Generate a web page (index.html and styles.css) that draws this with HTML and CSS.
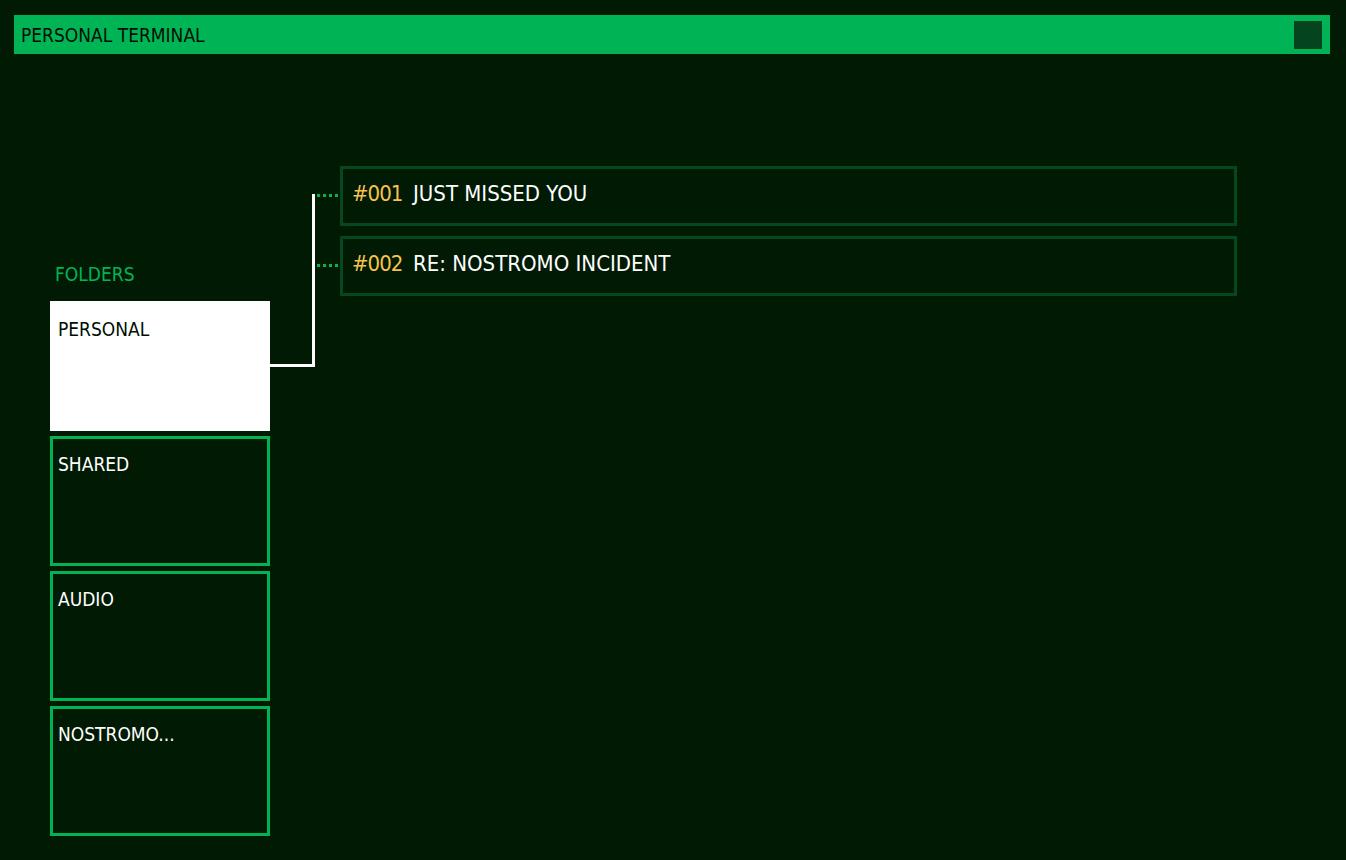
FILE: index.html
```html
<!DOCTYPE html>
<html>
<head>
<meta charset="utf-8">
<title>Personal Terminal</title>
<link rel="stylesheet" href="styles.css">
</head>
<body>
<header class="titlebar">
  <span class="title">PERSONAL TERMINAL</span>
  <span class="close-box"></span>
</header>
<main class="main">
  <section class="folders">
    <div class="folders-label">FOLDERS</div>
    <div class="folder folder-active">PERSONAL</div>
    <div class="folder">SHARED</div>
    <div class="folder">AUDIO</div>
    <div class="folder">NOSTROMO...</div>
  </section>
  <svg class="connector" width="70" height="202" viewBox="0 0 70 202">
    <rect x="42" y="28" width="3" height="173" fill="#ffffff"/>
    <rect x="0" y="198" width="45" height="3" fill="#ffffff"/>
    <g fill="#00b456">
      <rect x="47" y="28" width="3" height="3"/>
      <rect x="53" y="28" width="3" height="3"/>
      <rect x="59" y="28" width="3" height="3"/>
      <rect x="65" y="28" width="3" height="3"/>
      <rect x="47" y="98" width="3" height="3"/>
      <rect x="53" y="98" width="3" height="3"/>
      <rect x="59" y="98" width="3" height="3"/>
      <rect x="65" y="98" width="3" height="3"/>
    </g>
  </svg>
  <section class="messages">
    <div class="message"><span class="msg-num">#001</span><span class="msg-title">JUST MISSED YOU</span></div>
    <div class="message"><span class="msg-num">#002</span><span class="msg-title">RE: NOSTROMO INCIDENT</span></div>
  </section>
</main>
</body>
</html>
```

FILE: styles.css
```css
* { box-sizing: border-box; }

html, body {
  margin: 0;
  padding: 0;
  background: #001a03;
}

body {
  width: 1346px;
  height: 860px;
  overflow: hidden;
  font-family: "DejaVu Sans Condensed", "DejaVu Sans", sans-serif;
  font-stretch: condensed;
  color: #ffffff;
}

.titlebar {
  margin: 15px 16px 0 14px;
  height: 39px;
  background: #00b456;
  display: flex;
  align-items: center;
  justify-content: space-between;
  padding: 0 8px 0 7px;
}

.title {
  font-size: 19px;
  line-height: 24px;
  color: #000f02;
}

.close-box {
  width: 28px;
  height: 28px;
  background: #044520;
}

.main {
  display: flex;
  align-items: flex-start;
  padding-top: 112px;
}

.folders {
  margin-left: 50px;
  width: 220px;
  flex: none;
  display: flex;
  flex-direction: column;
  gap: 5px;
}

.folders-label {
  margin-top: 96px;
  margin-bottom: 10px;
  padding-left: 5px;
  font-size: 19px;
  line-height: 24px;
  color: #00b456;
}

.folder {
  height: 130px;
  border: 3px solid #00b456;
  padding: 13px 4px 0 5px;
  font-size: 19px;
  line-height: 24px;
  color: #ffffff;
}

.folder-active {
  background: #ffffff;
  border-color: #ffffff;
  color: #000f02;
}

.connector {
  flex: none;
  display: block;
}

.messages {
  width: 897px;
  flex: none;
  display: flex;
  flex-direction: column;
  gap: 10px;
}

.message {
  height: 60px;
  border: 3px solid #05481f;
  display: flex;
  align-items: center;
  padding: 0 9px 4px 9px;
  font-size: 22px;
  line-height: 28px;
}

.msg-num {
  width: 61px;
  flex: none;
  color: #f7c24e;
  letter-spacing: -1px;
}

.msg-title {
  color: #ffffff;
}
```
